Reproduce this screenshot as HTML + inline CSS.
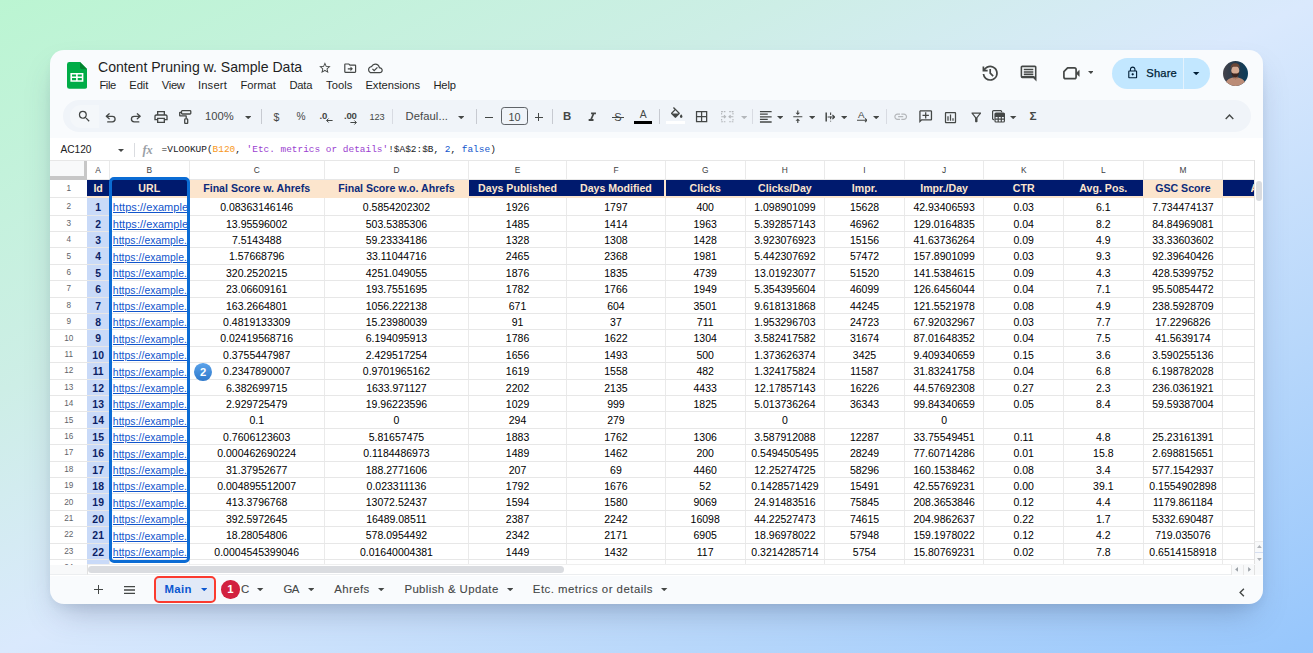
<!DOCTYPE html>
<html lang="en"><head><meta charset="utf-8"><title>Content Pruning w. Sample Data</title>
<style>
*{box-sizing:border-box;margin:0;padding:0}
html,body{width:1313px;height:653px;overflow:hidden}
body{position:relative;font-family:"Liberation Sans",Arial,sans-serif;background:linear-gradient(to bottom right,#bbf5d2 0%,#cdeee6 30%,#dae9fd 50%,#b9d8fb 75%,#96c6fc 100%);}
.card{position:absolute;left:50px;top:50px;width:1213px;height:554px;background:#f9fbfd;border-radius:14px;box-shadow:0 16px 32px -10px rgba(55,70,105,.34),0 5px 10px -2px rgba(55,65,95,.07);overflow:hidden}
.abs{position:absolute;white-space:nowrap}
.t{position:absolute;white-space:nowrap;line-height:1;transform:translateY(-50%)}
.tc{position:absolute;white-space:nowrap;line-height:1;transform:translate(-50%,-50%)}
.title{font-size:14.1px;color:#1f1f1f;letter-spacing:-.01px}
.menu{font-size:11.2px;color:#1f1f1f}
.pill{position:absolute;left:12.5px;top:50.3px;width:1188.8px;height:31.7px;border-radius:16px;background:#f0f4f9}
.fbar{position:absolute;left:0;top:87.5px;width:1213px;height:23px;background:#fff}
.grid{position:absolute;left:0;top:110px;width:1213px;height:415.5px;background:#fff;overflow:hidden}
.cell{position:absolute;font-size:10.4px;color:#000;text-align:center;white-space:nowrap;overflow:hidden;line-height:1}
.c{position:absolute;height:12px;line-height:12px;text-align:center;white-space:nowrap;overflow:hidden;color:#000}
.vl{position:absolute;width:1px;background:#eaeaea}
.hl{position:absolute;height:1px;background:#e7e7e7}
.ico{position:absolute}
.tab{font-size:10.9px;color:#444746;letter-spacing:.1px}
</style></head><body>
<div class="card">

<svg class="ico" style="left:16.799999999999997px;top:12px" width="20.2" height="26.8" viewBox="0 0 20.2 26.8"><path d="M2.4 0H13l7.2 7.2V24.4a2.4 2.4 0 0 1-2.4 2.4H2.4A2.400 2.400 0 0 1 0 24.400V2.400A2.400 2.400 0 0 1 2.400 0z" fill="#00ac47"/><path d="M13 0l7.2 7.2H14.800A1.800 1.800 0 0 1 13 5.400z" fill="#00832d"/><path d="M3.4 10.900h13.000v8.900H3.400zM5 12.400v2.200h4.100v-2.200zM10.700 12.400v2.200h4.100v-2.200zM5 16.100v2.200h4.100v-2.200zM10.700 16.100v2.200h4.100v-2.200z" fill="#fff" fill-rule="evenodd"/></svg>
<div class="t title" style="left:48.00px;top:17.40px">Content Pruning w. Sample Data</div>
<div class="t menu" style="left:49.40px;top:35.60px;letter-spacing:-0.4px">File</div>
<div class="t menu" style="left:79.20px;top:35.60px;letter-spacing:0px">Edit</div>
<div class="t menu" style="left:111.80px;top:35.60px;letter-spacing:-0.3px">View</div>
<div class="t menu" style="left:147.90px;top:35.60px;letter-spacing:0.2px">Insert</div>
<div class="t menu" style="left:190.40px;top:35.60px;letter-spacing:0px">Format</div>
<div class="t menu" style="left:239.40px;top:35.60px;letter-spacing:-0.2px">Data</div>
<div class="t menu" style="left:276.00px;top:35.60px;letter-spacing:0.05px">Tools</div>
<div class="t menu" style="left:315.40px;top:35.60px;letter-spacing:0px">Extensions</div>
<div class="t menu" style="left:383.40px;top:35.60px;letter-spacing:-0.12px">Help</div>
<svg class="ico" style="left:268.10px;top:10.80px;" width="13.80" height="13.80" viewBox="0 0 24 24" fill="#444746"><path d="M22 9.24l-7.19-.62L12 2 9.19 8.63 2 9.24l5.46 4.73L5.82 21 12 17.27 18.18 21l-1.63-7.03L22 9.24zM12 15.4l-3.76 2.27 1-4.28-3.32-2.88 4.38-.38L12 6.1l1.71 4.04 4.38.38-3.32 2.88 1 4.28L12 15.4z"/></svg>
<svg class="ico" style="left:293.20px;top:10.60px;" width="14.40" height="14.40" viewBox="0 0 24 24" fill="#444746"><path d="M20 6h-8l-2-2H4c-1.1 0-2 .9-2 2v12c0 1.1.9 2 2 2h16c1.1 0 2-.9 2-2V8c0-1.1-.9-2-2-2zm0 12H4V6h5.17l2 2H20v10zm-7.5-1 4-4-4-4v3H8v2h4.5v3z"/></svg>
<svg class="ico" style="left:318.30px;top:10.60px;" width="14.80" height="14.80" viewBox="0 0 24 24" fill="#444746"><path d="M19.35 10.04C18.67 6.59 15.64 4 12 4 9.11 4 6.6 5.64 5.35 8.04 2.34 8.36 0 10.91 0 14c0 3.31 2.69 6 6 6h13c2.76 0 5-2.24 5-5 0-2.64-2.05-4.78-4.65-4.96zM19 18H6c-2.21 0-4-1.79-4-4 0-2.05 1.53-3.76 3.56-3.97l1.07-.11.5-.95C8.08 7.14 9.94 6 12 6c2.62 0 4.88 1.86 5.39 4.43l.3 1.5 1.53.11c1.56.1 2.78 1.41 2.78 2.96 0 1.65-1.35 3-3 3zm-9-3.82l-2.09-2.09L6.5 13.5 10 17l6.01-6.01-1.41-1.41z"/></svg>
<svg class="ico" style="left:929.70px;top:12.70px;" width="20.40" height="20.40" viewBox="0 0 24 24" fill="#444746"><path d="M12 21q-3.450 0-6.012-2.287Q3.425 16.425 3.050 13H5.100q.35 2.600 2.313 4.300Q9.375 19 12 19q2.925 0 4.963-2.038Q19 14.925 19 12t-2.037-4.963Q14.925 5 12 5q-1.725 0-3.225.8T6.250 8H9v2H3V4h2v2.350q1.275-1.600 3.113-2.475Q9.950 3 12 3q1.875 0 3.513.713 1.637.712 2.850 1.925 1.212 1.212 1.925 2.850Q21 10.125 21 12t-.712 3.513q-.713 1.637-1.925 2.850-1.213 1.212-2.850 1.925Q13.875 21 12 21Zm2.800-4.800L11 12.400V7h2v4.600l3.200 3.200Z"/></svg>
<svg class="ico" style="left:969.45px;top:13.80px;" width="19.10" height="19.10" viewBox="0 0 24 24" fill="#444746"><path d="M6 14h12v-2H6Zm0-3h12V9H6Zm0-3h12V6H6Zm16 14-4-4H4q-.825 0-1.412-.587Q2 15.825 2 15V4q0-.825.588-1.413Q3.175 2 4 2h16q.825 0 1.413.587Q22 3.175 22 4ZM4 4v11h14.825L20 16.175V4H4Z"/></svg>
<svg class="ico" style="left:1013.0px;top:17.200000000000003px" width="17" height="12.6" viewBox="0 0 17 12.600"><path d="M4.600 .9H11.400a1.700 1.700 0 0 1 1.700 1.700V10a1.700 1.700 0 0 1-1.700 1.700H2.600A1.700 1.700 0 0 1 .9 10V4.600z" fill="none" stroke="#444746" stroke-width="1.700" stroke-linejoin="round"/><path d="M13 6.300l3.300-3.100v6.200z" fill="#444746" stroke="#444746" stroke-width=".4" stroke-linejoin="round"/></svg>
<svg class="ico" style="left:1037.70px;top:21.45px;" width="5.80" height="2.90" viewBox="0 0 10 5" fill="#444746"><path d="M0 0h10L5 5z"/></svg>
<div class="abs" style="left:1062.20px;top:7.60px;width:97.80px;height:31.20px;border-radius:16px;background:#c2e7ff"></div>
<div class="abs" style="left:1133.20px;top:7.60px;width:1.00px;height:31.20px;background:#e4f2fd"></div>
<svg class="ico" style="left:1075.50px;top:15.70px;" width="13.40" height="13.40" viewBox="0 0 24 24" fill="#001d35"><path d="M18 8h-1V6c0-2.76-2.24-5-5-5S7 3.24 7 6v2H6c-1.1 0-2 .9-2 2v10c0 1.1.9 2 2 2h12c1.1 0 2-.9 2-2V10c0-1.1-.9-2-2-2zM9 6c0-1.66 1.34-3 3-3s3 1.34 3 3v2H9V6zm9 14H6V10h12v10zm-6-3c1.1 0 2-.9 2-2s-.9-2-2-2-2 .9-2 2 .9 2 2 2z"/></svg>
<div class="t " style="left:1096.30px;top:23.60px;font-size:11.2px;color:#001d35;letter-spacing:.15px;-webkit-text-stroke:.25px #001d35">Share</div>
<svg class="ico" style="left:1143.30px;top:21.60px;" width="6.40" height="3.20" viewBox="0 0 10 5" fill="#001d35"><path d="M0 0h10L5 5z"/></svg>
<svg class="ico" style="left:1172.95px;top:10.799999999999997px" width="25" height="25" viewBox="0 0 25 25"><defs><clipPath id="avc"><circle cx="12.5" cy="12.5" r="12.5"/></clipPath><linearGradient id="avbg" x1="0" x2="1" y1="0" y2="0"><stop offset="0" stop-color="#44434b"/><stop offset=".45" stop-color="#27394a"/><stop offset="1" stop-color="#0b3d5c"/></linearGradient></defs><g clip-path="url(#avc)"><rect width="25" height="25" fill="url(#avbg)"/><path d="M1.500 25C2.500 19.500 6 17.500 9.500 16.600L12.400 18.200L15.300 16.600C19 17.500 22.300 19.500 23.500 25z" fill="#bb8c77"/><rect x="10.400" y="13.500" width="4.200" height="4.600" rx="1" fill="#b07d66"/><ellipse cx="12.300" cy="9.600" rx="4" ry="4.900" fill="#d6aa92"/><path d="M8.400 10.800c.1 3.700 1.600 5.800 3.900 5.800s3.800-2.100 3.900-5.800c-.7 1.300-1.300 1.700-2.200 1.700h-3.400c-.9 0-1.500-.4-2.200-1.700z" fill="#3d2621"/><path d="M7.900 8.200C7.300 4.200 9.400 2.300 12.200 2.300s5.100 1.600 4.400 5.900c-.4-1.700-1.300-2.600-2-2.800-1.400.5-3.500.5-4.900 0-.9.500-1.500 1.400-1.800 2.800z" fill="#6b4636"/></g></svg>
<div class="pill"></div>
<div class="abs" style="left:20.00px;top:55.00px;width:29.30px;height:22.80px;background:rgba(255,255,255,.28);border-radius:11px 0 0 11px"></div>
<svg class="ico" style="left:26.90px;top:59.40px;" width="14.80" height="14.80" viewBox="0 0 24 24" fill="#444746"><path d="M15.5 14h-.79l-.28-.27A6.471 6.471 0 0 0 16 9.5 6.5 6.5 0 1 0 9.5 16c1.61 0 3.09-.59 4.23-1.57l.27.28v.79l5 4.99L20.49 19l-4.99-5zm-6 0C7.01 14 5 11.99 5 9.5S7.01 5 9.5 5 14 7.01 14 9.5 11.99 14 9.5 14z"/></svg>
<svg class="ico" style="left:55.400000000000006px;top:61.8px" width="11.5" height="11" viewBox="0 0 11.500 11"><path d="M4.200 1.800L1.300 4.300L4.200 6.800M1.500 4.300H7.300a2.800 2.800 0 0 1 0 5.600H2.700" fill="none" stroke="#444746" stroke-width="1.300" stroke-linecap="round" stroke-linejoin="round"/></svg>
<svg class="ico" style="left:80.19999999999999px;top:61.8px;transform:scaleX(-1)" width="11.5" height="11" viewBox="0 0 11.500 11"><path d="M4.200 1.800L1.300 4.300L4.200 6.800M1.500 4.300H7.300a2.800 2.800 0 0 1 0 5.600H2.700" fill="none" stroke="#444746" stroke-width="1.300" stroke-linecap="round" stroke-linejoin="round"/></svg>
<svg class="ico" style="left:102.90px;top:59.00px;" width="16.00" height="16.00" viewBox="0 0 24 24" fill="#444746"><path d="M19 8h-1V3H6v5H5c-1.66 0-3 1.34-3 3v6h4v4h12v-4h4v-6c0-1.66-1.34-3-3-3zM8 5h8v3H8V5zm8 12v2H8v-4h8v2zm2-2v-2H6v2H4v-4c0-.55.45-1 1-1h14c.55 0 1 .45 1 1v4h-2z"/></svg>
<svg class="ico" style="left:129.2px;top:60.2px" width="12.500" height="14.200" viewBox="0 0 12.500 14.200"><g fill="none" stroke="#444746" stroke-width="1.300" stroke-linejoin="round"><rect x="2.500" y=".7" width="9.300" height="3.300" rx=".8"/><path d="M2.500 2.300H1a.3.300 0 0 0-.3.300V5.600a.3.300 0 0 0 .3.300H7.200V8.600"/><rect x="5.700" y="8.900" width="3" height="4.600" rx=".8"/></g></svg>
<div class="t " style="left:155.00px;top:67.30px;font-size:11.200px;color:#444746;letter-spacing:0">100%</div>
<svg class="ico" style="left:194.60px;top:65.70px;" width="6.40" height="3.20" viewBox="0 0 10 5" fill="#444746"><path d="M0 0h10L5 5z"/></svg>
<div class="abs" style="left:211.00px;top:58.60px;width:1.00px;height:15.60px;background:#c7cad1"></div>
<div class="tc " style="left:226.40px;top:67.30px;font-size:10.600px;color:#444746">$</div>
<div class="tc " style="left:251.00px;top:67.30px;font-size:10.200px;color:#444746">%</div>
<div class="t " style="left:269.60px;top:65.60px;font-size:9.600px;font-weight:bold;color:#444746;letter-spacing:-.2px">.0</div>
<svg class="ico" style="left:275.6px;top:68.0px" width="7" height="5" viewBox="0 0 7 5"><path d="M2.600 .5L.6 2.500L2.600 4.500M.8 2.500H6.600" fill="none" stroke="#444746" stroke-width="1"/></svg>
<div class="t " style="left:294.00px;top:65.60px;font-size:9.600px;font-weight:bold;color:#444746;letter-spacing:-.2px">.00</div>
<svg class="ico" style="left:300.4px;top:70.2px" width="7" height="5" viewBox="0 0 7 5"><path d="M4.400 .5L6.400 2.500L4.400 4.500M6.200 2.500H.4" fill="none" stroke="#444746" stroke-width="1"/></svg>
<div class="tc " style="left:327.00px;top:67.50px;font-size:9.200px;color:#444746;letter-spacing:-.1px">123</div>
<div class="abs" style="left:342.10px;top:58.60px;width:1.00px;height:15.60px;background:#d8dbe2"></div>
<div class="t " style="left:355.50px;top:67.30px;font-size:11.200px;color:#444746;letter-spacing:.1px">Defaul...</div>
<svg class="ico" style="left:407.50px;top:65.70px;" width="6.40" height="3.20" viewBox="0 0 10 5" fill="#444746"><path d="M0 0h10L5 5z"/></svg>
<div class="abs" style="left:426.00px;top:58.60px;width:1.00px;height:15.60px;background:#c7cad1"></div>
<div class="abs" style="left:434.90px;top:66.70px;width:8.00px;height:1.20px;background:#444746"></div>
<div class="abs" style="left:451.00px;top:57.00px;width:26.70px;height:18.20px;border:1px solid #5f6368;border-radius:3.200px"></div>
<div class="tc " style="left:464.40px;top:67.40px;font-size:10.800px;color:#444746">10</div>
<div class="abs" style="left:484.60px;top:66.70px;width:8.00px;height:1.20px;background:#444746"></div>
<div class="abs" style="left:488.00px;top:63.30px;width:1.20px;height:8.00px;background:#444746"></div>
<div class="abs" style="left:502.30px;top:58.60px;width:1.00px;height:15.60px;background:#c7cad1"></div>
<div class="tc " style="left:517.00px;top:67.30px;font-size:11.400px;font-weight:bold;color:#444746">B</div>
<svg class="ico" style="left:535.40px;top:59.80px;" width="14.60" height="14.60" viewBox="0 0 24 24" fill="#444746"><path d="M10 4v3h2.210l-3.420 8H6v3h8v-3h-2.210l3.420-8H18V4z"/></svg>
<div class="tc " style="left:567.80px;top:67.30px;font-size:11px;color:#444746">S</div>
<div class="abs" style="left:562.20px;top:66.80px;width:11.40px;height:1.10px;background:#444746"></div>
<div class="tc " style="left:593.20px;top:65.30px;font-size:10.400px;color:#444746">A</div>
<div class="abs" style="left:584.00px;top:71.20px;width:18.00px;height:3.00px;background:#000"></div>
<div class="abs" style="left:608.90px;top:58.60px;width:1.00px;height:15.60px;background:#c7cad1"></div>
<svg class="ico" style="left:618.60px;top:56.50px;" width="15.40" height="15.40" viewBox="0 0 24 24" fill="#444746"><path d="M16.56 8.94L7.62 0 6.21 1.41l2.38 2.38-5.15 5.15c-.59.59-.59 1.54 0 2.12l5.5 5.5c.29.29.68.44 1.06.44s.77-.15 1.06-.44l5.5-5.5c.59-.58.59-1.53 0-2.12zM5.21 10L10 5.21 14.79 10H5.210zM19 11.5s-2 2.170-2 3.500c0 1.100.9 2 2 2s2-.9 2-2c0-1.330-2-3.500-2-3.500z"/></svg>
<div class="abs" style="left:616.20px;top:71.20px;width:18.40px;height:3.00px;background:#fff"></div>
<svg class="ico" style="left:643.80px;top:59.40px;" width="15.20" height="15.20" viewBox="0 0 24 24" fill="#444746"><path d="M3 3v18h18V3H3zm8 16H5v-6h6v6zm0-8H5V5h6v6zm8 8h-6v-6h6v6zm0-8h-6V5h6v6z"/></svg>
<svg class="ico" style="left:671.2px;top:61.3px" width="12.6" height="11.4" viewBox="0 0 12.600 11.400"><g fill="none" stroke="#b4b7bb" stroke-width="1.100"><path d="M.6 3.400V.6H4.400M8.200 .6H12V3.400M12 8V10.800H8.200M4.400 10.800H.6V8" stroke-dasharray="1.600 .9"/><path d="M.2 5.700H4.400M3 4.200L4.600 5.700L3 7.200M12.400 5.700H8.200M9.600 4.200L8 5.700L9.600 7.200"/></g></svg>
<svg class="ico" style="left:691.00px;top:65.70px;" width="6.40" height="3.20" viewBox="0 0 10 5" fill="#b4b7bb"><path d="M0 0h10L5 5z"/></svg>
<div class="abs" style="left:701.50px;top:58.60px;width:1.00px;height:15.60px;background:#d8dbe2"></div>
<svg class="ico" style="left:708.20px;top:59.20px;" width="15.60" height="15.60" viewBox="0 0 24 24" fill="#444746"><path d="M15 15H3v2h12v-2zm0-8H3v2h12V7zM3 13h18v-2H3v2zm0 8h18v-2H3v2zM3 3v2h18V3H3z"/></svg>
<svg class="ico" style="left:726.60px;top:65.70px;" width="6.40" height="3.20" viewBox="0 0 10 5" fill="#444746"><path d="M0 0h10L5 5z"/></svg>
<svg class="ico" style="left:740.60px;top:60.20px;" width="13.60" height="13.60" viewBox="0 0 24 24" fill="#444746"><path d="M8 19h3v4h2v-4h3l-4-4-4 4zm8-14h-3V1h-2v4H8l4 4 4-4zM4 11v2h16v-2H4z"/></svg>
<svg class="ico" style="left:758.50px;top:65.70px;" width="6.40" height="3.20" viewBox="0 0 10 5" fill="#444746"><path d="M0 0h10L5 5z"/></svg>
<svg class="ico" style="left:774.6px;top:62.0px" width="10" height="10" viewBox="0 0 10 10"><g fill="none" stroke="#444746"><path d="M1.200 .4V9.600" stroke-width="1.500"/><path d="M5.600 .4V9.600" stroke-width="1.100" stroke-dasharray="2.600 1.600"/><path d="M2.600 5H9.400M7.400 2.800L9.600 5L7.400 7.200" stroke-width="1.200"/></g></svg>
<svg class="ico" style="left:790.90px;top:65.70px;" width="6.40" height="3.20" viewBox="0 0 10 5" fill="#444746"><path d="M0 0h10L5 5z"/></svg>
<div class="tc " style="left:811.40px;top:64.80px;font-size:9.800px;color:#444746">A</div>
<svg class="ico" style="left:806.8px;top:68.0px" width="10.600" height="4.600" viewBox="0 0 10.600 4.600"><path d="M0 2.300H9.800M8 .4L10 2.300L8 4.200" fill="none" stroke="#444746" stroke-width="1.100"/></svg>
<svg class="ico" style="left:823.10px;top:65.70px;" width="6.40" height="3.20" viewBox="0 0 10 5" fill="#444746"><path d="M0 0h10L5 5z"/></svg>
<div class="abs" style="left:835.70px;top:58.60px;width:1.00px;height:15.60px;background:#d8dbe2"></div>
<svg class="ico" style="left:843.40px;top:59.30px;" width="15.40" height="15.40" viewBox="0 0 24 24" fill="#b4b7bb"><path d="M3.9 12c0-1.71 1.39-3.1 3.1-3.1h4V7H7c-2.76 0-5 2.24-5 5s2.24 5 5 5h4v-1.9H7c-1.71 0-3.1-1.39-3.1-3.1zM8 13h8v-2H8v2zm9-6h-4v1.9h4c1.71 0 3.1 1.39 3.1 3.1s-1.39 3.1-3.1 3.1h-4V17h4c2.76 0 5-2.24 5-5s-2.24-5-5-5z"/></svg>
<svg class="ico" style="left:867.80px;top:59.30px;transform:scaleX(-1)" width="15.40" height="15.40" viewBox="0 0 24 24" fill="#444746"><path d="M22 4c0-1.1-.9-2-2-2H4c-1.1 0-2 .9-2 2v12c0 1.1.9 2 2 2h14l4 4V4zm-2 13.17L18.83 16H4V4h16v13.17zM13 5h-2v4H7v2h4v4h2v-4h4V9h-4z"/></svg>
<svg class="ico" style="left:893.20px;top:59.60px;" width="15.00" height="15.00" viewBox="0 0 24 24" fill="#444746"><path d="M9 17H7v-7h2v7zm4 0h-2V7h2v10zm4 0h-2v-4h2v4zm2 2H5V5h14v14zm0-16H5c-1.1 0-2 .9-2 2v14c0 1.1.9 2 2 2h14c1.1 0 2-.9 2-2V5c0-1.1-.9-2-2-2z"/></svg>
<svg class="ico" style="left:918.80px;top:60.00px;" width="14.60" height="14.60" viewBox="0 0 24 24" fill="#444746"><path d="M7 6h10l-5.01 6.3L7 6zm-2.750-.39C6.270 8.200 10 13 10 13v6c0 .55.45 1 1 1h2c.55 0 1-.45 1-1v-6s3.720-4.800 5.740-7.390c.51-.66.04-1.610-.79-1.610H5.040c-.83 0-1.300.95-.79 1.610z"/></svg>
<svg class="ico" style="left:942.2px;top:60.2px" width="13" height="12.6" viewBox="0 0 13 12.600"><g fill="none" stroke="#444746" stroke-width="1.200"><path d="M2.200 9.600H1.600a1 1 0 0 1-1-1V1.600a1 1 0 0 1 1-1H8.600a1 1 0 0 1 1 1V2.200"/><rect x="3" y="3" width="9.400" height="9" rx="1"/><path d="M3 6.400H12.400M3 9.200H12.400M6.200 6.400V12M9.300 6.400V12"/></g><rect x="3" y="3" width="9.400" height="3.400" fill="#444746"/></svg>
<svg class="ico" style="left:960.30px;top:65.70px;" width="6.40" height="3.20" viewBox="0 0 10 5" fill="#444746"><path d="M0 0h10L5 5z"/></svg>
<div class="tc " style="left:983.00px;top:67.30px;font-size:11.800px;color:#444746;font-weight:bold">&Sigma;</div>
<svg class="ico" style="left:1174.6px;top:64.4px" width="9" height="5.600" viewBox="0 0 9 5.600"><path d="M.7 4.900L4.500 1.100L8.300 4.900" fill="none" stroke="#444746" stroke-width="1.400"/></svg>
<div class="fbar"></div>
<div class="t " style="left:10.60px;top:99.90px;font-size:10.200px;color:#202124;letter-spacing:-.08px">AC120</div>
<svg class="ico" style="left:68.00px;top:98.60px;" width="6.00" height="3.00" viewBox="0 0 10 5" fill="#444746"><path d="M0 0h10L5 5z"/></svg>
<div class="abs" style="left:83.60px;top:92.80px;width:1.00px;height:14.00px;background:#dadce0"></div>
<div class="t " style="left:92.40px;top:99.90px;font-size:12.400px;font-weight:bold;color:#9aa0a6;font-family:'Liberation Serif',serif;font-style:italic"><i>f</i>x</div>
<div class="t " style="left:111.60px;top:100.00px;font-size:9.455px;color:#202124;font-family:'Liberation Mono',monospace">=VLOOKUP(<span style="color:#f7981d">B120</span>, <span style="color:#9b3fd0">'Etc. metrics or details'</span>!$A$2:$B, <span style="color:#1155cc">2</span>, <span style="color:#1155cc">false</span>)</div>
<div class="grid">
<div class="abs" style="left:0;top:0;width:37.00px;height:19.60px;background:#f8f9fa"></div>
<div class="abs" style="left:34px;top:0;width:3.2px;height:19.60px;background:#c7c7c7"></div>
<div class="abs" style="left:0;top:16.20px;width:37.00px;height:3.4px;background:#c7c7c7"></div>
<div class="abs" style="left:36.80px;top:37.80px;width:22.70px;height:367.60px;background:#c9daf8"></div>
<div class="abs" style="left:36.80px;top:19.60px;width:23.20px;height:18.20px;background:#001a6e"></div>
<div class="abs" style="left:59.50px;top:19.60px;width:80.00px;height:18.20px;background:#001a6e"></div>
<div class="abs" style="left:139.00px;top:19.60px;width:135.90px;height:18.20px;background:#fce5cd"></div>
<div class="abs" style="left:274.40px;top:19.60px;width:144.60px;height:18.20px;background:#fce5cd"></div>
<div class="abs" style="left:418.50px;top:19.60px;width:98.60px;height:18.20px;background:#001a6e"></div>
<div class="abs" style="left:516.60px;top:19.60px;width:99.20px;height:18.20px;background:#001a6e"></div>
<div class="abs" style="left:615.30px;top:19.60px;width:80.30px;height:18.20px;background:#001a6e"></div>
<div class="abs" style="left:695.10px;top:19.60px;width:80.10px;height:18.20px;background:#001a6e"></div>
<div class="abs" style="left:774.70px;top:19.60px;width:80.10px;height:18.20px;background:#001a6e"></div>
<div class="abs" style="left:854.30px;top:19.60px;width:80.10px;height:18.20px;background:#001a6e"></div>
<div class="abs" style="left:933.90px;top:19.60px;width:80.10px;height:18.20px;background:#001a6e"></div>
<div class="abs" style="left:1013.50px;top:19.60px;width:80.10px;height:18.20px;background:#001a6e"></div>
<div class="abs" style="left:1093.10px;top:19.60px;width:80.10px;height:18.20px;background:#fce5cd"></div>
<div class="abs" style="left:1172.70px;top:19.60px;width:31.30px;height:18.20px;background:#001a6e"></div>
<div class="abs" style="left:36.80px;top:36.00px;width:1167.20px;height:1.8px;background:#fce5cd"></div>
<div class="abs" style="left:614.30px;top:19.60px;width:1.8px;height:18.20px;background:#fce5cd"></div>
<div class="vl" style="left:59.00px;top:0;height:19.60px"></div>
<div class="vl" style="left:59.00px;top:37.80px;height:367.60px"></div>
<div class="vl" style="left:138.50px;top:0;height:19.60px"></div>
<div class="vl" style="left:138.50px;top:37.80px;height:367.60px"></div>
<div class="vl" style="left:273.90px;top:0;height:19.60px"></div>
<div class="vl" style="left:273.90px;top:37.80px;height:367.60px"></div>
<div class="vl" style="left:418.00px;top:0;height:19.60px"></div>
<div class="vl" style="left:418.00px;top:37.80px;height:367.60px"></div>
<div class="vl" style="left:516.10px;top:0;height:19.60px"></div>
<div class="vl" style="left:516.10px;top:37.80px;height:367.60px"></div>
<div class="vl" style="left:614.80px;top:0;height:19.60px"></div>
<div class="vl" style="left:614.80px;top:37.80px;height:367.60px"></div>
<div class="vl" style="left:694.60px;top:0;height:19.60px"></div>
<div class="vl" style="left:694.60px;top:37.80px;height:367.60px"></div>
<div class="vl" style="left:774.20px;top:0;height:19.60px"></div>
<div class="vl" style="left:774.20px;top:37.80px;height:367.60px"></div>
<div class="vl" style="left:853.80px;top:0;height:19.60px"></div>
<div class="vl" style="left:853.80px;top:37.80px;height:367.60px"></div>
<div class="vl" style="left:933.40px;top:0;height:19.60px"></div>
<div class="vl" style="left:933.40px;top:37.80px;height:367.60px"></div>
<div class="vl" style="left:1013.00px;top:0;height:19.60px"></div>
<div class="vl" style="left:1013.00px;top:37.80px;height:367.60px"></div>
<div class="vl" style="left:1092.60px;top:0;height:19.60px"></div>
<div class="vl" style="left:1092.60px;top:37.80px;height:367.60px"></div>
<div class="vl" style="left:1172.20px;top:0;height:19.60px"></div>
<div class="vl" style="left:1172.20px;top:37.80px;height:367.60px"></div>
<div class="vl" style="left:1203.50px;top:0;height:19.60px"></div>
<div class="vl" style="left:1203.50px;top:37.80px;height:367.60px"></div>
<div class="hl" style="left:0;top:0;width:1213px"></div>
<div class="hl" style="left:0;top:37.30px;width:37px"></div>
<div class="hl" style="left:0;top:54.80px;width:1204.00px"></div>
<div class="hl" style="left:0;top:71.10px;width:1204.00px"></div>
<div class="hl" style="left:0;top:87.30px;width:1204.00px"></div>
<div class="hl" style="left:0;top:103.70px;width:1204.00px"></div>
<div class="hl" style="left:0;top:120.10px;width:1204.00px"></div>
<div class="hl" style="left:0;top:136.50px;width:1204.00px"></div>
<div class="hl" style="left:0;top:152.90px;width:1204.00px"></div>
<div class="hl" style="left:0;top:169.30px;width:1204.00px"></div>
<div class="hl" style="left:0;top:185.70px;width:1204.00px"></div>
<div class="hl" style="left:0;top:202.10px;width:1204.00px"></div>
<div class="hl" style="left:0;top:218.50px;width:1204.00px"></div>
<div class="hl" style="left:0;top:234.90px;width:1204.00px"></div>
<div class="hl" style="left:0;top:251.30px;width:1204.00px"></div>
<div class="hl" style="left:0;top:267.70px;width:1204.00px"></div>
<div class="hl" style="left:0;top:284.10px;width:1204.00px"></div>
<div class="hl" style="left:0;top:300.50px;width:1204.00px"></div>
<div class="hl" style="left:0;top:316.90px;width:1204.00px"></div>
<div class="hl" style="left:0;top:333.30px;width:1204.00px"></div>
<div class="hl" style="left:0;top:349.70px;width:1204.00px"></div>
<div class="hl" style="left:0;top:366.10px;width:1204.00px"></div>
<div class="hl" style="left:0;top:382.50px;width:1204.00px"></div>
<div class="hl" style="left:0;top:398.90px;width:1204.00px"></div>
<div class="hl" style="left:36.80px;top:19.10px;width:1167.20px"></div>
<div class="c" style="left:36.80px;width:22.70px;top:4px;font-size:8.4px;color:#3c4043">A</div>
<div class="c" style="left:59.50px;width:79.50px;top:4px;font-size:8.4px;color:#3c4043">B</div>
<div class="c" style="left:139.00px;width:135.40px;top:4px;font-size:8.4px;color:#3c4043">C</div>
<div class="c" style="left:274.40px;width:144.10px;top:4px;font-size:8.4px;color:#3c4043">D</div>
<div class="c" style="left:418.50px;width:98.10px;top:4px;font-size:8.4px;color:#3c4043">E</div>
<div class="c" style="left:516.60px;width:98.70px;top:4px;font-size:8.4px;color:#3c4043">F</div>
<div class="c" style="left:615.30px;width:79.80px;top:4px;font-size:8.4px;color:#3c4043">G</div>
<div class="c" style="left:695.10px;width:79.60px;top:4px;font-size:8.4px;color:#3c4043">H</div>
<div class="c" style="left:774.70px;width:79.60px;top:4px;font-size:8.4px;color:#3c4043">I</div>
<div class="c" style="left:854.30px;width:79.60px;top:4px;font-size:8.4px;color:#3c4043">J</div>
<div class="c" style="left:933.90px;width:79.60px;top:4px;font-size:8.4px;color:#3c4043">K</div>
<div class="c" style="left:1013.50px;width:79.60px;top:4px;font-size:8.4px;color:#3c4043">L</div>
<div class="c" style="left:1093.10px;width:79.60px;top:4px;font-size:8.4px;color:#3c4043">M</div>
<div class="c" style="left:0.00px;width:37.50px;top:23px;font-size:8.2px;color:#5f6368">1</div>
<div class="c" style="left:0.00px;width:37.50px;top:41px;font-size:8.2px;color:#5f6368">2</div>
<div class="c" style="left:0.00px;width:37.50px;top:58px;font-size:8.2px;color:#5f6368">3</div>
<div class="c" style="left:0.00px;width:37.50px;top:74px;font-size:8.2px;color:#5f6368">4</div>
<div class="c" style="left:0.00px;width:37.50px;top:91px;font-size:8.2px;color:#5f6368">5</div>
<div class="c" style="left:0.00px;width:37.50px;top:107px;font-size:8.2px;color:#5f6368">6</div>
<div class="c" style="left:0.00px;width:37.50px;top:123px;font-size:8.2px;color:#5f6368">7</div>
<div class="c" style="left:0.00px;width:37.50px;top:140px;font-size:8.2px;color:#5f6368">8</div>
<div class="c" style="left:0.00px;width:37.50px;top:156px;font-size:8.2px;color:#5f6368">9</div>
<div class="c" style="left:0.00px;width:37.50px;top:173px;font-size:8.2px;color:#5f6368">10</div>
<div class="c" style="left:0.00px;width:37.50px;top:189px;font-size:8.2px;color:#5f6368">11</div>
<div class="c" style="left:0.00px;width:37.50px;top:205px;font-size:8.2px;color:#5f6368">12</div>
<div class="c" style="left:0.00px;width:37.50px;top:222px;font-size:8.2px;color:#5f6368">13</div>
<div class="c" style="left:0.00px;width:37.50px;top:238px;font-size:8.2px;color:#5f6368">14</div>
<div class="c" style="left:0.00px;width:37.50px;top:255px;font-size:8.2px;color:#5f6368">15</div>
<div class="c" style="left:0.00px;width:37.50px;top:271px;font-size:8.2px;color:#5f6368">16</div>
<div class="c" style="left:0.00px;width:37.50px;top:287px;font-size:8.2px;color:#5f6368">17</div>
<div class="c" style="left:0.00px;width:37.50px;top:304px;font-size:8.2px;color:#5f6368">18</div>
<div class="c" style="left:0.00px;width:37.50px;top:320px;font-size:8.2px;color:#5f6368">19</div>
<div class="c" style="left:0.00px;width:37.50px;top:337px;font-size:8.2px;color:#5f6368">20</div>
<div class="c" style="left:0.00px;width:37.50px;top:353px;font-size:8.2px;color:#5f6368">21</div>
<div class="c" style="left:0.00px;width:37.50px;top:369px;font-size:8.2px;color:#5f6368">22</div>
<div class="c" style="left:0.00px;width:37.50px;top:386px;font-size:8.2px;color:#5f6368">23</div>
<div class="c" style="left:0.00px;width:37.50px;top:402px;font-size:8.2px;color:#5f6368">24</div>
<div class="c" style="left:36.80px;width:22.70px;top:22px;font-size:10.6px;font-weight:bold;color:#fce5cd">Id</div>
<div class="c" style="left:59.50px;width:79.50px;top:22px;font-size:10.6px;font-weight:bold;color:#fce5cd">URL</div>
<div class="c" style="left:139.00px;width:135.40px;top:22px;font-size:10.6px;font-weight:bold;color:#0b2a7a">Final Score w. Ahrefs</div>
<div class="c" style="left:274.40px;width:144.10px;top:22px;font-size:10.6px;font-weight:bold;color:#0b2a7a">Final Score w.o. Ahrefs</div>
<div class="c" style="left:418.50px;width:98.10px;top:22px;font-size:10.6px;font-weight:bold;color:#fce5cd">Days Published</div>
<div class="c" style="left:516.60px;width:98.70px;top:22px;font-size:10.6px;font-weight:bold;color:#fce5cd">Days Modified</div>
<div class="c" style="left:615.30px;width:79.80px;top:22px;font-size:10.6px;font-weight:bold;color:#fce5cd">Clicks</div>
<div class="c" style="left:695.10px;width:79.60px;top:22px;font-size:10.6px;font-weight:bold;color:#fce5cd">Clicks/Day</div>
<div class="c" style="left:774.70px;width:79.60px;top:22px;font-size:10.6px;font-weight:bold;color:#fce5cd">Impr.</div>
<div class="c" style="left:854.30px;width:79.60px;top:22px;font-size:10.6px;font-weight:bold;color:#fce5cd">Impr./Day</div>
<div class="c" style="left:933.90px;width:79.60px;top:22px;font-size:10.6px;font-weight:bold;color:#fce5cd">CTR</div>
<div class="c" style="left:1013.50px;width:79.60px;top:22px;font-size:10.6px;font-weight:bold;color:#fce5cd">Avg. Pos.</div>
<div class="c" style="left:1093.10px;width:79.60px;top:22px;font-size:10.6px;font-weight:bold;color:#0b2a7a">GSC Score</div>
<div class="c" style="left:1200.60px;width:13.40px;top:22px;font-size:10.6px;font-weight:bold;color:#fce5cd;text-align:left">A</div>
<div class="c" style="left:36.80px;width:22.70px;top:42px;font-size:10.4px;font-weight:bold;color:#0b1f66">1</div>
<div class="c" style="left:62.80px;width:74.10px;top:41px;font-size:11.0px;color:#1155cc;text-align:left;letter-spacing:.05px"><span style="text-decoration:underline">https://example.com/</span></div>
<div class="c" style="left:139.00px;width:135.40px;top:41px;font-size:10.5px;">0.08363146146</div>
<div class="c" style="left:274.40px;width:144.10px;top:41px;font-size:10.5px;">0.5854202302</div>
<div class="c" style="left:418.50px;width:98.10px;top:41px;font-size:10.5px;">1926</div>
<div class="c" style="left:516.60px;width:98.70px;top:41px;font-size:10.5px;">1797</div>
<div class="c" style="left:615.30px;width:79.80px;top:41px;font-size:10.5px;">400</div>
<div class="c" style="left:695.10px;width:79.60px;top:41px;font-size:10.5px;">1.098901099</div>
<div class="c" style="left:774.70px;width:79.60px;top:41px;font-size:10.5px;">15628</div>
<div class="c" style="left:854.30px;width:79.60px;top:41px;font-size:10.5px;">42.93406593</div>
<div class="c" style="left:933.90px;width:79.60px;top:41px;font-size:10.5px;">0.03</div>
<div class="c" style="left:1013.50px;width:79.60px;top:41px;font-size:10.5px;">6.1</div>
<div class="c" style="left:1093.10px;width:79.60px;top:41px;font-size:10.5px;">7.734474137</div>
<div class="c" style="left:36.80px;width:22.70px;top:59px;font-size:10.4px;font-weight:bold;color:#0b1f66">2</div>
<div class="c" style="left:62.80px;width:74.10px;top:58px;font-size:11.0px;color:#1155cc;text-align:left;letter-spacing:.05px"><span style="text-decoration:underline">https://example.com/</span></div>
<div class="c" style="left:139.00px;width:135.40px;top:58px;font-size:10.5px;">13.95596002</div>
<div class="c" style="left:274.40px;width:144.10px;top:58px;font-size:10.5px;">503.5385306</div>
<div class="c" style="left:418.50px;width:98.10px;top:58px;font-size:10.5px;">1485</div>
<div class="c" style="left:516.60px;width:98.70px;top:58px;font-size:10.5px;">1414</div>
<div class="c" style="left:615.30px;width:79.80px;top:58px;font-size:10.5px;">1963</div>
<div class="c" style="left:695.10px;width:79.60px;top:58px;font-size:10.5px;">5.392857143</div>
<div class="c" style="left:774.70px;width:79.60px;top:58px;font-size:10.5px;">46962</div>
<div class="c" style="left:854.30px;width:79.60px;top:58px;font-size:10.5px;">129.0164835</div>
<div class="c" style="left:933.90px;width:79.60px;top:58px;font-size:10.5px;">0.04</div>
<div class="c" style="left:1013.50px;width:79.60px;top:58px;font-size:10.5px;">8.2</div>
<div class="c" style="left:1093.10px;width:79.60px;top:58px;font-size:10.5px;">84.84969081</div>
<div class="c" style="left:36.80px;width:22.70px;top:75px;font-size:10.4px;font-weight:bold;color:#0b1f66">3</div>
<div class="c" style="left:62.80px;width:74.10px;top:75px;font-size:10.4px;color:#1155cc;text-align:left;letter-spacing:.05px"><span style="text-decoration:underline">https://example.com/</span></div>
<div class="c" style="left:139.00px;width:135.40px;top:74px;font-size:10.5px;">7.5143488</div>
<div class="c" style="left:274.40px;width:144.10px;top:74px;font-size:10.5px;">59.23334186</div>
<div class="c" style="left:418.50px;width:98.10px;top:74px;font-size:10.5px;">1328</div>
<div class="c" style="left:516.60px;width:98.70px;top:74px;font-size:10.5px;">1308</div>
<div class="c" style="left:615.30px;width:79.80px;top:74px;font-size:10.5px;">1428</div>
<div class="c" style="left:695.10px;width:79.60px;top:74px;font-size:10.5px;">3.923076923</div>
<div class="c" style="left:774.70px;width:79.60px;top:74px;font-size:10.5px;">15156</div>
<div class="c" style="left:854.30px;width:79.60px;top:74px;font-size:10.5px;">41.63736264</div>
<div class="c" style="left:933.90px;width:79.60px;top:74px;font-size:10.5px;">0.09</div>
<div class="c" style="left:1013.50px;width:79.60px;top:74px;font-size:10.5px;">4.9</div>
<div class="c" style="left:1093.10px;width:79.60px;top:74px;font-size:10.5px;">33.33603602</div>
<div class="c" style="left:36.80px;width:22.70px;top:91px;font-size:10.4px;font-weight:bold;color:#0b1f66">4</div>
<div class="c" style="left:62.80px;width:74.10px;top:92px;font-size:10.4px;color:#1155cc;text-align:left;letter-spacing:.05px"><span style="text-decoration:underline">https://example.com/</span></div>
<div class="c" style="left:139.00px;width:135.40px;top:90px;font-size:10.5px;">1.57668796</div>
<div class="c" style="left:274.40px;width:144.10px;top:90px;font-size:10.5px;">33.11044716</div>
<div class="c" style="left:418.50px;width:98.10px;top:90px;font-size:10.5px;">2465</div>
<div class="c" style="left:516.60px;width:98.70px;top:90px;font-size:10.5px;">2368</div>
<div class="c" style="left:615.30px;width:79.80px;top:90px;font-size:10.5px;">1981</div>
<div class="c" style="left:695.10px;width:79.60px;top:90px;font-size:10.5px;">5.442307692</div>
<div class="c" style="left:774.70px;width:79.60px;top:90px;font-size:10.5px;">57472</div>
<div class="c" style="left:854.30px;width:79.60px;top:90px;font-size:10.5px;">157.8901099</div>
<div class="c" style="left:933.90px;width:79.60px;top:90px;font-size:10.5px;">0.03</div>
<div class="c" style="left:1013.50px;width:79.60px;top:90px;font-size:10.5px;">9.3</div>
<div class="c" style="left:1093.10px;width:79.60px;top:90px;font-size:10.5px;">92.39640426</div>
<div class="c" style="left:36.80px;width:22.70px;top:108px;font-size:10.4px;font-weight:bold;color:#0b1f66">5</div>
<div class="c" style="left:62.80px;width:74.10px;top:108px;font-size:10.4px;color:#1155cc;text-align:left;letter-spacing:.05px"><span style="text-decoration:underline">https://example.com/</span></div>
<div class="c" style="left:139.00px;width:135.40px;top:107px;font-size:10.5px;">320.2520215</div>
<div class="c" style="left:274.40px;width:144.10px;top:107px;font-size:10.5px;">4251.049055</div>
<div class="c" style="left:418.50px;width:98.10px;top:107px;font-size:10.5px;">1876</div>
<div class="c" style="left:516.60px;width:98.70px;top:107px;font-size:10.5px;">1835</div>
<div class="c" style="left:615.30px;width:79.80px;top:107px;font-size:10.5px;">4739</div>
<div class="c" style="left:695.10px;width:79.60px;top:107px;font-size:10.5px;">13.01923077</div>
<div class="c" style="left:774.70px;width:79.60px;top:107px;font-size:10.5px;">51520</div>
<div class="c" style="left:854.30px;width:79.60px;top:107px;font-size:10.5px;">141.5384615</div>
<div class="c" style="left:933.90px;width:79.60px;top:107px;font-size:10.5px;">0.09</div>
<div class="c" style="left:1013.50px;width:79.60px;top:107px;font-size:10.5px;">4.3</div>
<div class="c" style="left:1093.10px;width:79.60px;top:107px;font-size:10.5px;">428.5399752</div>
<div class="c" style="left:36.80px;width:22.70px;top:124px;font-size:10.4px;font-weight:bold;color:#0b1f66">6</div>
<div class="c" style="left:62.80px;width:74.10px;top:125px;font-size:10.4px;color:#1155cc;text-align:left;letter-spacing:.05px"><span style="text-decoration:underline">https://example.com/</span></div>
<div class="c" style="left:139.00px;width:135.40px;top:123px;font-size:10.5px;">23.06609161</div>
<div class="c" style="left:274.40px;width:144.10px;top:123px;font-size:10.5px;">193.7551695</div>
<div class="c" style="left:418.50px;width:98.10px;top:123px;font-size:10.5px;">1782</div>
<div class="c" style="left:516.60px;width:98.70px;top:123px;font-size:10.5px;">1766</div>
<div class="c" style="left:615.30px;width:79.80px;top:123px;font-size:10.5px;">1949</div>
<div class="c" style="left:695.10px;width:79.60px;top:123px;font-size:10.5px;">5.354395604</div>
<div class="c" style="left:774.70px;width:79.60px;top:123px;font-size:10.5px;">46099</div>
<div class="c" style="left:854.30px;width:79.60px;top:123px;font-size:10.5px;">126.6456044</div>
<div class="c" style="left:933.90px;width:79.60px;top:123px;font-size:10.5px;">0.04</div>
<div class="c" style="left:1013.50px;width:79.60px;top:123px;font-size:10.5px;">7.1</div>
<div class="c" style="left:1093.10px;width:79.60px;top:123px;font-size:10.5px;">95.50854472</div>
<div class="c" style="left:36.80px;width:22.70px;top:141px;font-size:10.4px;font-weight:bold;color:#0b1f66">7</div>
<div class="c" style="left:62.80px;width:74.10px;top:141px;font-size:10.4px;color:#1155cc;text-align:left;letter-spacing:.05px"><span style="text-decoration:underline">https://example.com/</span></div>
<div class="c" style="left:139.00px;width:135.40px;top:140px;font-size:10.5px;">163.2664801</div>
<div class="c" style="left:274.40px;width:144.10px;top:140px;font-size:10.5px;">1056.222138</div>
<div class="c" style="left:418.50px;width:98.10px;top:140px;font-size:10.5px;">671</div>
<div class="c" style="left:516.60px;width:98.70px;top:140px;font-size:10.5px;">604</div>
<div class="c" style="left:615.30px;width:79.80px;top:140px;font-size:10.5px;">3501</div>
<div class="c" style="left:695.10px;width:79.60px;top:140px;font-size:10.5px;">9.618131868</div>
<div class="c" style="left:774.70px;width:79.60px;top:140px;font-size:10.5px;">44245</div>
<div class="c" style="left:854.30px;width:79.60px;top:140px;font-size:10.5px;">121.5521978</div>
<div class="c" style="left:933.90px;width:79.60px;top:140px;font-size:10.5px;">0.08</div>
<div class="c" style="left:1013.50px;width:79.60px;top:140px;font-size:10.5px;">4.9</div>
<div class="c" style="left:1093.10px;width:79.60px;top:140px;font-size:10.5px;">238.5928709</div>
<div class="c" style="left:36.80px;width:22.70px;top:157px;font-size:10.4px;font-weight:bold;color:#0b1f66">8</div>
<div class="c" style="left:62.80px;width:74.10px;top:157px;font-size:10.4px;color:#1155cc;text-align:left;letter-spacing:.05px"><span style="text-decoration:underline">https://example.com/</span></div>
<div class="c" style="left:139.00px;width:135.40px;top:156px;font-size:10.5px;">0.4819133309</div>
<div class="c" style="left:274.40px;width:144.10px;top:156px;font-size:10.5px;">15.23980039</div>
<div class="c" style="left:418.50px;width:98.10px;top:156px;font-size:10.5px;">91</div>
<div class="c" style="left:516.60px;width:98.70px;top:156px;font-size:10.5px;">37</div>
<div class="c" style="left:615.30px;width:79.80px;top:156px;font-size:10.5px;">711</div>
<div class="c" style="left:695.10px;width:79.60px;top:156px;font-size:10.5px;">1.953296703</div>
<div class="c" style="left:774.70px;width:79.60px;top:156px;font-size:10.5px;">24723</div>
<div class="c" style="left:854.30px;width:79.60px;top:156px;font-size:10.5px;">67.92032967</div>
<div class="c" style="left:933.90px;width:79.60px;top:156px;font-size:10.5px;">0.03</div>
<div class="c" style="left:1013.50px;width:79.60px;top:156px;font-size:10.5px;">7.7</div>
<div class="c" style="left:1093.10px;width:79.60px;top:156px;font-size:10.5px;">17.2296826</div>
<div class="c" style="left:36.80px;width:22.70px;top:173px;font-size:10.4px;font-weight:bold;color:#0b1f66">9</div>
<div class="c" style="left:62.80px;width:74.10px;top:174px;font-size:10.4px;color:#1155cc;text-align:left;letter-spacing:.05px"><span style="text-decoration:underline">https://example.com/</span></div>
<div class="c" style="left:139.00px;width:135.40px;top:172px;font-size:10.5px;">0.02419568716</div>
<div class="c" style="left:274.40px;width:144.10px;top:172px;font-size:10.5px;">6.194095913</div>
<div class="c" style="left:418.50px;width:98.10px;top:172px;font-size:10.5px;">1786</div>
<div class="c" style="left:516.60px;width:98.70px;top:172px;font-size:10.5px;">1622</div>
<div class="c" style="left:615.30px;width:79.80px;top:172px;font-size:10.5px;">1304</div>
<div class="c" style="left:695.10px;width:79.60px;top:172px;font-size:10.5px;">3.582417582</div>
<div class="c" style="left:774.70px;width:79.60px;top:172px;font-size:10.5px;">31674</div>
<div class="c" style="left:854.30px;width:79.60px;top:172px;font-size:10.5px;">87.01648352</div>
<div class="c" style="left:933.90px;width:79.60px;top:172px;font-size:10.5px;">0.04</div>
<div class="c" style="left:1013.50px;width:79.60px;top:172px;font-size:10.5px;">7.5</div>
<div class="c" style="left:1093.10px;width:79.60px;top:172px;font-size:10.5px;">41.5639174</div>
<div class="c" style="left:36.80px;width:22.70px;top:190px;font-size:10.4px;font-weight:bold;color:#0b1f66">10</div>
<div class="c" style="left:62.80px;width:74.10px;top:190px;font-size:10.4px;color:#1155cc;text-align:left;letter-spacing:.05px"><span style="text-decoration:underline">https://example.com/</span></div>
<div class="c" style="left:139.00px;width:135.40px;top:189px;font-size:10.5px;">0.3755447987</div>
<div class="c" style="left:274.40px;width:144.10px;top:189px;font-size:10.5px;">2.429517254</div>
<div class="c" style="left:418.50px;width:98.10px;top:189px;font-size:10.5px;">1656</div>
<div class="c" style="left:516.60px;width:98.70px;top:189px;font-size:10.5px;">1493</div>
<div class="c" style="left:615.30px;width:79.80px;top:189px;font-size:10.5px;">500</div>
<div class="c" style="left:695.10px;width:79.60px;top:189px;font-size:10.5px;">1.373626374</div>
<div class="c" style="left:774.70px;width:79.60px;top:189px;font-size:10.5px;">3425</div>
<div class="c" style="left:854.30px;width:79.60px;top:189px;font-size:10.5px;">9.409340659</div>
<div class="c" style="left:933.90px;width:79.60px;top:189px;font-size:10.5px;">0.15</div>
<div class="c" style="left:1013.50px;width:79.60px;top:189px;font-size:10.5px;">3.6</div>
<div class="c" style="left:1093.10px;width:79.60px;top:189px;font-size:10.5px;">3.590255136</div>
<div class="c" style="left:36.80px;width:22.70px;top:206px;font-size:10.4px;font-weight:bold;color:#0b1f66">11</div>
<div class="c" style="left:62.80px;width:74.10px;top:207px;font-size:10.4px;color:#1155cc;text-align:left;letter-spacing:.05px"><span style="text-decoration:underline">https://example.com/</span></div>
<div class="c" style="left:139.00px;width:135.40px;top:205px;font-size:10.5px;">0.2347890007</div>
<div class="c" style="left:274.40px;width:144.10px;top:205px;font-size:10.5px;">0.9701965162</div>
<div class="c" style="left:418.50px;width:98.10px;top:205px;font-size:10.5px;">1619</div>
<div class="c" style="left:516.60px;width:98.70px;top:205px;font-size:10.5px;">1558</div>
<div class="c" style="left:615.30px;width:79.80px;top:205px;font-size:10.5px;">482</div>
<div class="c" style="left:695.10px;width:79.60px;top:205px;font-size:10.5px;">1.324175824</div>
<div class="c" style="left:774.70px;width:79.60px;top:205px;font-size:10.5px;">11587</div>
<div class="c" style="left:854.30px;width:79.60px;top:205px;font-size:10.5px;">31.83241758</div>
<div class="c" style="left:933.90px;width:79.60px;top:205px;font-size:10.5px;">0.04</div>
<div class="c" style="left:1013.50px;width:79.60px;top:205px;font-size:10.5px;">6.8</div>
<div class="c" style="left:1093.10px;width:79.60px;top:205px;font-size:10.5px;">6.198782028</div>
<div class="c" style="left:36.80px;width:22.70px;top:223px;font-size:10.4px;font-weight:bold;color:#0b1f66">12</div>
<div class="c" style="left:62.80px;width:74.10px;top:223px;font-size:10.4px;color:#1155cc;text-align:left;letter-spacing:.05px"><span style="text-decoration:underline">https://example.com/</span></div>
<div class="c" style="left:139.00px;width:135.40px;top:222px;font-size:10.5px;">6.382699715</div>
<div class="c" style="left:274.40px;width:144.10px;top:222px;font-size:10.5px;">1633.971127</div>
<div class="c" style="left:418.50px;width:98.10px;top:222px;font-size:10.5px;">2202</div>
<div class="c" style="left:516.60px;width:98.70px;top:222px;font-size:10.5px;">2135</div>
<div class="c" style="left:615.30px;width:79.80px;top:222px;font-size:10.5px;">4433</div>
<div class="c" style="left:695.10px;width:79.60px;top:222px;font-size:10.5px;">12.17857143</div>
<div class="c" style="left:774.70px;width:79.60px;top:222px;font-size:10.5px;">16226</div>
<div class="c" style="left:854.30px;width:79.60px;top:222px;font-size:10.5px;">44.57692308</div>
<div class="c" style="left:933.90px;width:79.60px;top:222px;font-size:10.5px;">0.27</div>
<div class="c" style="left:1013.50px;width:79.60px;top:222px;font-size:10.5px;">2.3</div>
<div class="c" style="left:1093.10px;width:79.60px;top:222px;font-size:10.5px;">236.0361921</div>
<div class="c" style="left:36.80px;width:22.70px;top:239px;font-size:10.4px;font-weight:bold;color:#0b1f66">13</div>
<div class="c" style="left:62.80px;width:74.10px;top:239px;font-size:10.4px;color:#1155cc;text-align:left;letter-spacing:.05px"><span style="text-decoration:underline">https://example.com/</span></div>
<div class="c" style="left:139.00px;width:135.40px;top:238px;font-size:10.5px;">2.929725479</div>
<div class="c" style="left:274.40px;width:144.10px;top:238px;font-size:10.5px;">19.96223596</div>
<div class="c" style="left:418.50px;width:98.10px;top:238px;font-size:10.5px;">1029</div>
<div class="c" style="left:516.60px;width:98.70px;top:238px;font-size:10.5px;">999</div>
<div class="c" style="left:615.30px;width:79.80px;top:238px;font-size:10.5px;">1825</div>
<div class="c" style="left:695.10px;width:79.60px;top:238px;font-size:10.5px;">5.013736264</div>
<div class="c" style="left:774.70px;width:79.60px;top:238px;font-size:10.5px;">36343</div>
<div class="c" style="left:854.30px;width:79.60px;top:238px;font-size:10.5px;">99.84340659</div>
<div class="c" style="left:933.90px;width:79.60px;top:238px;font-size:10.5px;">0.05</div>
<div class="c" style="left:1013.50px;width:79.60px;top:238px;font-size:10.5px;">8.4</div>
<div class="c" style="left:1093.10px;width:79.60px;top:238px;font-size:10.5px;">59.59387004</div>
<div class="c" style="left:36.80px;width:22.70px;top:255px;font-size:10.4px;font-weight:bold;color:#0b1f66">14</div>
<div class="c" style="left:62.80px;width:74.10px;top:256px;font-size:10.4px;color:#1155cc;text-align:left;letter-spacing:.05px"><span style="text-decoration:underline">https://example.com/</span></div>
<div class="c" style="left:139.00px;width:135.40px;top:254px;font-size:10.5px;">0.1</div>
<div class="c" style="left:274.40px;width:144.10px;top:254px;font-size:10.5px;">0</div>
<div class="c" style="left:418.50px;width:98.10px;top:254px;font-size:10.5px;">294</div>
<div class="c" style="left:516.60px;width:98.70px;top:254px;font-size:10.5px;">279</div>
<div class="c" style="left:695.10px;width:79.60px;top:254px;font-size:10.5px;">0</div>
<div class="c" style="left:854.30px;width:79.60px;top:254px;font-size:10.5px;">0</div>
<div class="c" style="left:36.80px;width:22.70px;top:272px;font-size:10.4px;font-weight:bold;color:#0b1f66">15</div>
<div class="c" style="left:62.80px;width:74.10px;top:272px;font-size:10.4px;color:#1155cc;text-align:left;letter-spacing:.05px"><span style="text-decoration:underline">https://example.com/</span></div>
<div class="c" style="left:139.00px;width:135.40px;top:271px;font-size:10.5px;">0.7606123603</div>
<div class="c" style="left:274.40px;width:144.10px;top:271px;font-size:10.5px;">5.81657475</div>
<div class="c" style="left:418.50px;width:98.10px;top:271px;font-size:10.5px;">1883</div>
<div class="c" style="left:516.60px;width:98.70px;top:271px;font-size:10.5px;">1762</div>
<div class="c" style="left:615.30px;width:79.80px;top:271px;font-size:10.5px;">1306</div>
<div class="c" style="left:695.10px;width:79.60px;top:271px;font-size:10.5px;">3.587912088</div>
<div class="c" style="left:774.70px;width:79.60px;top:271px;font-size:10.5px;">12287</div>
<div class="c" style="left:854.30px;width:79.60px;top:271px;font-size:10.5px;">33.75549451</div>
<div class="c" style="left:933.90px;width:79.60px;top:271px;font-size:10.5px;">0.11</div>
<div class="c" style="left:1013.50px;width:79.60px;top:271px;font-size:10.5px;">4.8</div>
<div class="c" style="left:1093.10px;width:79.60px;top:271px;font-size:10.5px;">25.23161391</div>
<div class="c" style="left:36.80px;width:22.70px;top:288px;font-size:10.4px;font-weight:bold;color:#0b1f66">16</div>
<div class="c" style="left:62.80px;width:74.10px;top:289px;font-size:10.4px;color:#1155cc;text-align:left;letter-spacing:.05px"><span style="text-decoration:underline">https://example.com/</span></div>
<div class="c" style="left:139.00px;width:135.40px;top:287px;font-size:10.5px;">0.000462690224</div>
<div class="c" style="left:274.40px;width:144.10px;top:287px;font-size:10.5px;">0.1184486973</div>
<div class="c" style="left:418.50px;width:98.10px;top:287px;font-size:10.5px;">1489</div>
<div class="c" style="left:516.60px;width:98.70px;top:287px;font-size:10.5px;">1462</div>
<div class="c" style="left:615.30px;width:79.80px;top:287px;font-size:10.5px;">200</div>
<div class="c" style="left:695.10px;width:79.60px;top:287px;font-size:10.5px;">0.5494505495</div>
<div class="c" style="left:774.70px;width:79.60px;top:287px;font-size:10.5px;">28249</div>
<div class="c" style="left:854.30px;width:79.60px;top:287px;font-size:10.5px;">77.60714286</div>
<div class="c" style="left:933.90px;width:79.60px;top:287px;font-size:10.5px;">0.01</div>
<div class="c" style="left:1013.50px;width:79.60px;top:287px;font-size:10.5px;">15.8</div>
<div class="c" style="left:1093.10px;width:79.60px;top:287px;font-size:10.5px;">2.698815651</div>
<div class="c" style="left:36.80px;width:22.70px;top:305px;font-size:10.4px;font-weight:bold;color:#0b1f66">17</div>
<div class="c" style="left:62.80px;width:74.10px;top:305px;font-size:10.4px;color:#1155cc;text-align:left;letter-spacing:.05px"><span style="text-decoration:underline">https://example.com/</span></div>
<div class="c" style="left:139.00px;width:135.40px;top:304px;font-size:10.5px;">31.37952677</div>
<div class="c" style="left:274.40px;width:144.10px;top:304px;font-size:10.5px;">188.2771606</div>
<div class="c" style="left:418.50px;width:98.10px;top:304px;font-size:10.5px;">207</div>
<div class="c" style="left:516.60px;width:98.70px;top:304px;font-size:10.5px;">69</div>
<div class="c" style="left:615.30px;width:79.80px;top:304px;font-size:10.5px;">4460</div>
<div class="c" style="left:695.10px;width:79.60px;top:304px;font-size:10.5px;">12.25274725</div>
<div class="c" style="left:774.70px;width:79.60px;top:304px;font-size:10.5px;">58296</div>
<div class="c" style="left:854.30px;width:79.60px;top:304px;font-size:10.5px;">160.1538462</div>
<div class="c" style="left:933.90px;width:79.60px;top:304px;font-size:10.5px;">0.08</div>
<div class="c" style="left:1013.50px;width:79.60px;top:304px;font-size:10.5px;">3.4</div>
<div class="c" style="left:1093.10px;width:79.60px;top:304px;font-size:10.5px;">577.1542937</div>
<div class="c" style="left:36.80px;width:22.70px;top:321px;font-size:10.4px;font-weight:bold;color:#0b1f66">18</div>
<div class="c" style="left:62.80px;width:74.10px;top:321px;font-size:10.4px;color:#1155cc;text-align:left;letter-spacing:.05px"><span style="text-decoration:underline">https://example.com/</span></div>
<div class="c" style="left:139.00px;width:135.40px;top:320px;font-size:10.5px;">0.004895512007</div>
<div class="c" style="left:274.40px;width:144.10px;top:320px;font-size:10.5px;">0.023311136</div>
<div class="c" style="left:418.50px;width:98.10px;top:320px;font-size:10.5px;">1792</div>
<div class="c" style="left:516.60px;width:98.70px;top:320px;font-size:10.5px;">1676</div>
<div class="c" style="left:615.30px;width:79.80px;top:320px;font-size:10.5px;">52</div>
<div class="c" style="left:695.10px;width:79.60px;top:320px;font-size:10.5px;">0.1428571429</div>
<div class="c" style="left:774.70px;width:79.60px;top:320px;font-size:10.5px;">15491</div>
<div class="c" style="left:854.30px;width:79.60px;top:320px;font-size:10.5px;">42.55769231</div>
<div class="c" style="left:933.90px;width:79.60px;top:320px;font-size:10.5px;">0.00</div>
<div class="c" style="left:1013.50px;width:79.60px;top:320px;font-size:10.5px;">39.1</div>
<div class="c" style="left:1093.10px;width:79.60px;top:320px;font-size:10.5px;">0.1554902898</div>
<div class="c" style="left:36.80px;width:22.70px;top:337px;font-size:10.4px;font-weight:bold;color:#0b1f66">19</div>
<div class="c" style="left:62.80px;width:74.10px;top:338px;font-size:10.4px;color:#1155cc;text-align:left;letter-spacing:.05px"><span style="text-decoration:underline">https://example.com/</span></div>
<div class="c" style="left:139.00px;width:135.40px;top:336px;font-size:10.5px;">413.3796768</div>
<div class="c" style="left:274.40px;width:144.10px;top:336px;font-size:10.5px;">13072.52437</div>
<div class="c" style="left:418.50px;width:98.10px;top:336px;font-size:10.5px;">1594</div>
<div class="c" style="left:516.60px;width:98.70px;top:336px;font-size:10.5px;">1580</div>
<div class="c" style="left:615.30px;width:79.80px;top:336px;font-size:10.5px;">9069</div>
<div class="c" style="left:695.10px;width:79.60px;top:336px;font-size:10.5px;">24.91483516</div>
<div class="c" style="left:774.70px;width:79.60px;top:336px;font-size:10.5px;">75845</div>
<div class="c" style="left:854.30px;width:79.60px;top:336px;font-size:10.5px;">208.3653846</div>
<div class="c" style="left:933.90px;width:79.60px;top:336px;font-size:10.5px;">0.12</div>
<div class="c" style="left:1013.50px;width:79.60px;top:336px;font-size:10.5px;">4.4</div>
<div class="c" style="left:1093.10px;width:79.60px;top:336px;font-size:10.5px;">1179.861184</div>
<div class="c" style="left:36.80px;width:22.70px;top:354px;font-size:10.4px;font-weight:bold;color:#0b1f66">20</div>
<div class="c" style="left:62.80px;width:74.10px;top:354px;font-size:10.4px;color:#1155cc;text-align:left;letter-spacing:.05px"><span style="text-decoration:underline">https://example.com/</span></div>
<div class="c" style="left:139.00px;width:135.40px;top:353px;font-size:10.5px;">392.5972645</div>
<div class="c" style="left:274.40px;width:144.10px;top:353px;font-size:10.5px;">16489.08511</div>
<div class="c" style="left:418.50px;width:98.10px;top:353px;font-size:10.5px;">2387</div>
<div class="c" style="left:516.60px;width:98.70px;top:353px;font-size:10.5px;">2242</div>
<div class="c" style="left:615.30px;width:79.80px;top:353px;font-size:10.5px;">16098</div>
<div class="c" style="left:695.10px;width:79.60px;top:353px;font-size:10.5px;">44.22527473</div>
<div class="c" style="left:774.70px;width:79.60px;top:353px;font-size:10.5px;">74615</div>
<div class="c" style="left:854.30px;width:79.60px;top:353px;font-size:10.5px;">204.9862637</div>
<div class="c" style="left:933.90px;width:79.60px;top:353px;font-size:10.5px;">0.22</div>
<div class="c" style="left:1013.50px;width:79.60px;top:353px;font-size:10.5px;">1.7</div>
<div class="c" style="left:1093.10px;width:79.60px;top:353px;font-size:10.5px;">5332.690487</div>
<div class="c" style="left:36.80px;width:22.70px;top:370px;font-size:10.4px;font-weight:bold;color:#0b1f66">21</div>
<div class="c" style="left:62.80px;width:74.10px;top:371px;font-size:10.4px;color:#1155cc;text-align:left;letter-spacing:.05px"><span style="text-decoration:underline">https://example.com/</span></div>
<div class="c" style="left:139.00px;width:135.40px;top:369px;font-size:10.5px;">18.28054806</div>
<div class="c" style="left:274.40px;width:144.10px;top:369px;font-size:10.5px;">578.0954492</div>
<div class="c" style="left:418.50px;width:98.10px;top:369px;font-size:10.5px;">2342</div>
<div class="c" style="left:516.60px;width:98.70px;top:369px;font-size:10.5px;">2171</div>
<div class="c" style="left:615.30px;width:79.80px;top:369px;font-size:10.5px;">6905</div>
<div class="c" style="left:695.10px;width:79.60px;top:369px;font-size:10.5px;">18.96978022</div>
<div class="c" style="left:774.70px;width:79.60px;top:369px;font-size:10.5px;">57948</div>
<div class="c" style="left:854.30px;width:79.60px;top:369px;font-size:10.5px;">159.1978022</div>
<div class="c" style="left:933.90px;width:79.60px;top:369px;font-size:10.5px;">0.12</div>
<div class="c" style="left:1013.50px;width:79.60px;top:369px;font-size:10.5px;">4.2</div>
<div class="c" style="left:1093.10px;width:79.60px;top:369px;font-size:10.5px;">719.035076</div>
<div class="c" style="left:36.80px;width:22.70px;top:387px;font-size:10.4px;font-weight:bold;color:#0b1f66">22</div>
<div class="c" style="left:62.80px;width:74.10px;top:387px;font-size:10.4px;color:#1155cc;text-align:left;letter-spacing:.05px"><span style="text-decoration:underline">https://example.com/</span></div>
<div class="c" style="left:139.00px;width:135.40px;top:386px;font-size:10.5px;">0.0004545399046</div>
<div class="c" style="left:274.40px;width:144.10px;top:386px;font-size:10.5px;">0.01640004381</div>
<div class="c" style="left:418.50px;width:98.10px;top:386px;font-size:10.5px;">1449</div>
<div class="c" style="left:516.60px;width:98.70px;top:386px;font-size:10.5px;">1432</div>
<div class="c" style="left:615.30px;width:79.80px;top:386px;font-size:10.5px;">117</div>
<div class="c" style="left:695.10px;width:79.60px;top:386px;font-size:10.5px;">0.3214285714</div>
<div class="c" style="left:774.70px;width:79.60px;top:386px;font-size:10.5px;">5754</div>
<div class="c" style="left:854.30px;width:79.60px;top:386px;font-size:10.5px;">15.80769231</div>
<div class="c" style="left:933.90px;width:79.60px;top:386px;font-size:10.5px;">0.02</div>
<div class="c" style="left:1013.50px;width:79.60px;top:386px;font-size:10.5px;">7.8</div>
<div class="c" style="left:1093.10px;width:79.60px;top:386px;font-size:10.5px;">0.6514158918</div>
<div class="abs" style="left:58.80px;top:17.40px;width:80.90px;height:385.70px;border:3.1px solid #0b6cd4;border-radius:5px"></div>
<div class="abs" style="left:144.10px;top:203.10px;width:17.8px;height:17.8px;border-radius:50%;background:linear-gradient(#5ba3ea,#2f79cb)"></div>
<div class="c" style="left:144.10px;width:17.8px;top:206px;font-size:11.2px;font-weight:bold;color:#fff">2</div>
<div class="abs" style="left:1204.20px;top:0.00px;width:9.80px;height:405.00px;background:#fff;border-left:1px solid #e1e1e1"></div>
<div class="abs" style="left:1206.20px;top:21.20px;width:6.20px;height:19.40px;background:#dadce0;border-radius:3.200px"></div>
<div class="abs" style="left:1204.20px;top:380.70px;width:9.80px;height:24.00px;background:#f8f9fa;border-left:1px solid #e1e1e1;border-top:1px solid #ececec"></div>
<svg class="ico" style="left:1206.9px;top:384.6px" width="4.800" height="3" viewBox="0 0 10 6" fill="#b0b3b8"><path d="M0 6L5 0L10 6z"/></svg>
<div class="abs" style="left:1205.20px;top:392.00px;width:8.60px;height:0.80px;background:#d5def0"></div>
<svg class="ico" style="left:1206.9px;top:397.6px" width="4.800" height="3" viewBox="0 0 10 6" fill="#b0b3b8"><path d="M0 0L5 6L10 0z"/></svg>
<div class="abs" style="left:36.80px;top:404.30px;width:1176.70px;height:11.20px;background:#fff;border-left:1px solid #e1e1e1;border-top:1px solid #efefef;border-bottom:1px solid #eceef0"></div>
<div class="abs" style="left:1181.40px;top:404.30px;width:32.20px;height:10.40px;background:#f8f9fa"></div>
<div class="abs" style="left:0.00px;top:405.20px;width:36.80px;height:10.30px;background:#f8f9fa;border-bottom:1px solid #eceef0"></div>
<div class="abs" style="left:38.40px;top:406.10px;width:476.00px;height:6.90px;background:#dadce0;border-radius:3.500px"></div>
<div class="abs" style="left:1181.00px;top:405.00px;width:1.00px;height:9.50px;background:#e8e8e8"></div>
<div class="abs" style="left:1193.00px;top:405.00px;width:1.00px;height:9.50px;background:#e8e8e8"></div>
<div class="abs" style="left:1204.20px;top:405.00px;width:1.00px;height:9.50px;background:#e1e1e1"></div>
<svg class="ico" style="left:1185.2px;top:407.20000000000005px" width="3.200" height="4.800" viewBox="0 0 6 10" fill="#9aa0a6"><path d="M6 0L0 5L6 10z"/></svg>
<svg class="ico" style="left:1198.4px;top:407.20000000000005px" width="3.200" height="4.800" viewBox="0 0 6 10" fill="#9aa0a6"><path d="M0 0L6 5L0 10z"/></svg>
</div>
<div class="abs" style="left:43.70px;top:538.85px;width:9.20px;height:1.50px;background:#444746"></div>
<div class="abs" style="left:47.55px;top:535.00px;width:1.50px;height:9.20px;background:#444746"></div>
<svg class="ico" style="left:74px;top:534.60px" width="11.2" height="10" viewBox="0 0 11.200 10"><path d="M0 1.600H11.200M0 5H11.200M0 8.400H11.200" stroke="#444746" stroke-width="1.350" fill="none"/></svg>
<div class="abs" style="left:104.00px;top:526.00px;width:62.40px;height:27.30px;border:2.800px solid #fb3b2f;border-radius:5px;background:#e1e9f7"></div>
<div class="t " style="left:114.60px;top:540.10px;font-size:11.400px;font-weight:bold;color:#0b57d0;letter-spacing:.28px">Main</div>
<svg class="ico" style="left:150.60px;top:538.20px;" width="6.40" height="3.20" viewBox="0 0 10 5" fill="#0b57d0"><path d="M0 0h10L5 5z"/></svg>
<div class="t " style="left:191.00px;top:540.10px;font-size:11.400px;color:#444746;-webkit-text-stroke:.1px #444746;letter-spacing:0px">C</div>
<svg class="ico" style="left:207.20px;top:538.20px;" width="6.40" height="3.20" viewBox="0 0 10 5" fill="#444746"><path d="M0 0h10L5 5z"/></svg>
<div class="abs" style="left:171.40px;top:530.40px;width:18.30px;height:18.30px;border-radius:50%;background:#d2213f"></div>
<div class="tc " style="left:180.40px;top:539.60px;font-size:11.400px;font-weight:bold;color:#fff">1</div>
<div class="t " style="left:233.50px;top:540.10px;font-size:11.400px;color:#444746;-webkit-text-stroke:.1px #444746;letter-spacing:-.7px">GA</div>
<svg class="ico" style="left:257.80px;top:538.20px;" width="6.40" height="3.20" viewBox="0 0 10 5" fill="#444746"><path d="M0 0h10L5 5z"/></svg>
<div class="t " style="left:284.20px;top:540.10px;font-size:11.400px;color:#444746;-webkit-text-stroke:.1px #444746;letter-spacing:.43px">Ahrefs</div>
<svg class="ico" style="left:328.30px;top:538.20px;" width="6.40" height="3.20" viewBox="0 0 10 5" fill="#444746"><path d="M0 0h10L5 5z"/></svg>
<div class="t " style="left:354.40px;top:540.10px;font-size:11.400px;color:#444746;-webkit-text-stroke:.1px #444746;letter-spacing:.39px">Publish &amp; Update</div>
<svg class="ico" style="left:456.80px;top:538.20px;" width="6.40" height="3.20" viewBox="0 0 10 5" fill="#444746"><path d="M0 0h10L5 5z"/></svg>
<div class="t " style="left:482.80px;top:540.10px;font-size:11.400px;color:#444746;-webkit-text-stroke:.1px #444746;letter-spacing:.49px">Etc. metrics or details</div>
<svg class="ico" style="left:611.20px;top:538.20px;" width="6.40" height="3.20" viewBox="0 0 10 5" fill="#444746"><path d="M0 0h10L5 5z"/></svg>
<svg class="ico" style="left:1189.4px;top:538.1px" width="5.600" height="9" viewBox="0 0 5.600 9"><path d="M4.900 .7L1.100 4.500L4.900 8.300" fill="none" stroke="#444746" stroke-width="1.400"/></svg>
</div></body></html>
